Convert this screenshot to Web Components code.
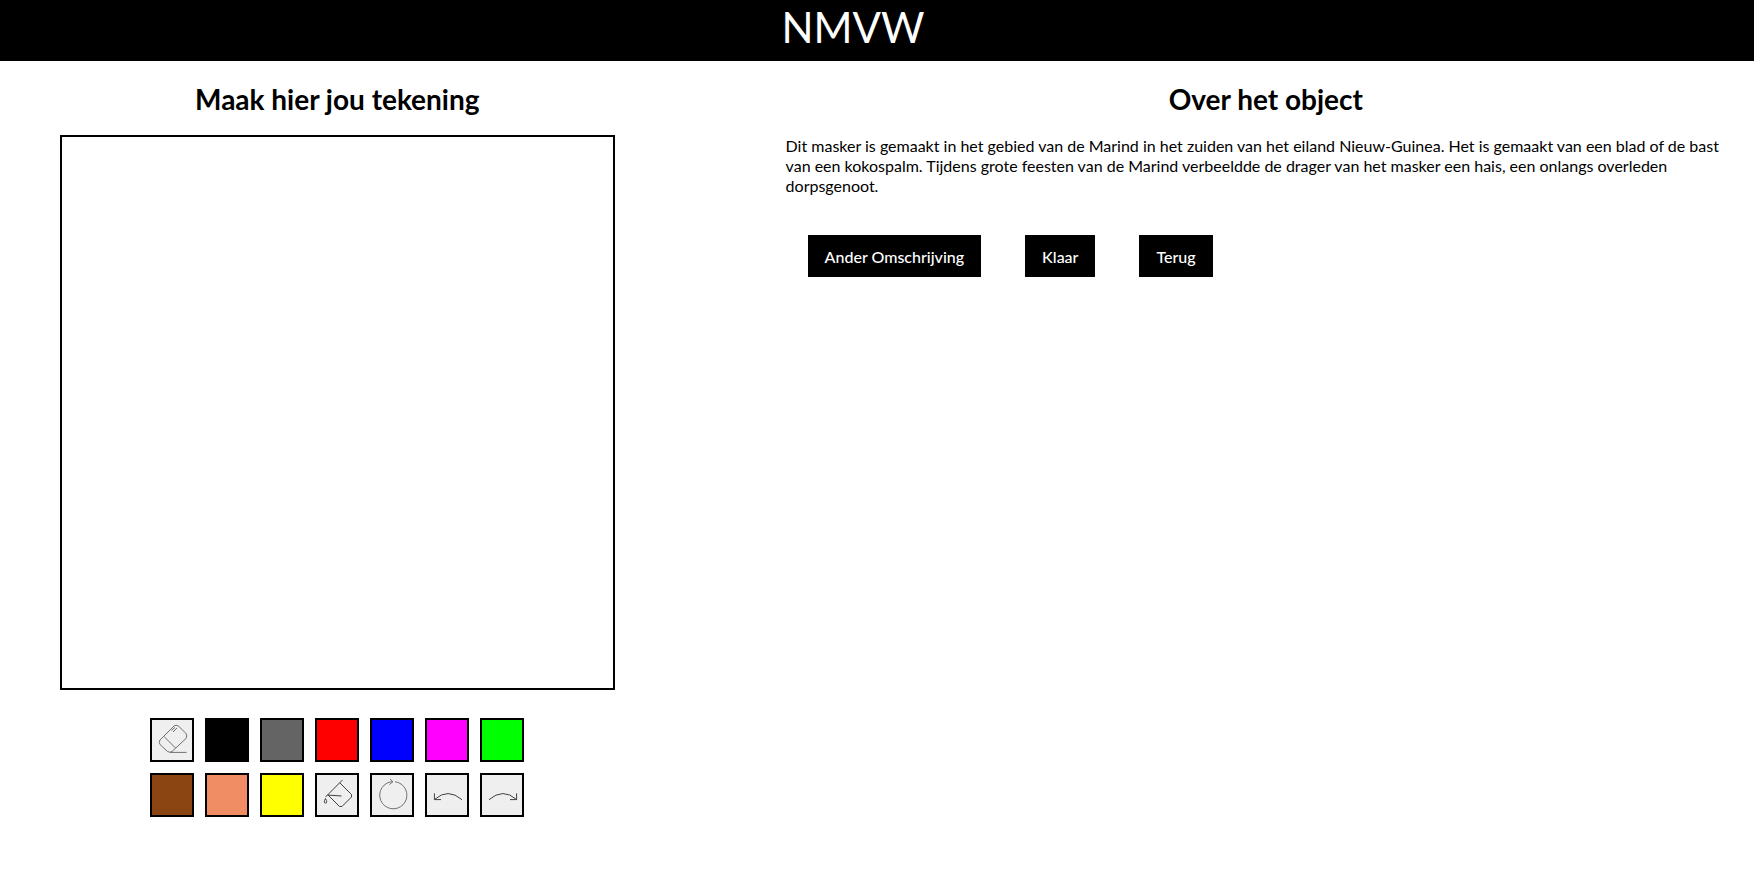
<!DOCTYPE html>
<html lang="nl">
<head>
<meta charset="utf-8">
<meta name="viewport" content="width=device-width, initial-scale=1">
<title>NMVW</title>
<style>
  body { margin: 0; background: #fff; color: #000; font: 16px/20px "Gill Sans MT", Lato, sans-serif; }
</style>
</head>
<body>
<nmvw-app></nmvw-app>
<script>
const define = (name, html) => {
  const template = document.createElement('template');
  template.innerHTML = html;
  customElements.define(name, class extends HTMLElement {
    constructor() {
      super();
      this.attachShadow({ mode: 'open' }).append(template.content.cloneNode(true));
    }
  });
};

define('site-header', `
  <style>
    :host { display: block; background: #000; color: #fff; text-align: center; padding: 3px 0 10px; }
    span { font-size: 42px; line-height: 48px; display: block; padding-right: 48px; }
  </style>
  <span><slot></slot></span>`);

define('page-title', `
  <style>
    :host { display: block; padding: 23px 0 20px; text-align: center; }
    h2 { margin: 0; font-size: 28px; line-height: 31px; font-weight: 700; }
  </style>
  <h2><slot></slot></h2>`);

define('action-button', `
  <style>
    :host { display: block; }
    button { font: inherit; font-weight: 500; color: #fff; background: #000; border: 0; border-radius: 0; padding: 12px 17px 10px; margin: 0; cursor: pointer; }
  </style>
  <button type="button"><slot></slot></button>`);

const icons = {
  eraser: '<path d="M7.500 20.500 22 6q2-1.500 4.500 0l7.500 7.500q1.500 2.500 0 5L20 31.500q-2 1.500-4.500 0L8 24.500q-1.500-2 0-4ZM12 16.500 23.500 28M18 32.400H34.500M19.500 10.500 23 7.500M21 12l4-4"/>',
  fill: '<path class="dark" d="M25.500 5 8.500 22M23 8 34.500 19.500V22L25 31.500H22.500L11 20M10.500 20 24.500 21M8.500 23.500q-2.500 4.500 0 4.500t0-4.500Z"/>',
  reset: '<path d="M23 6.700A13.600 13.600 0 1 1 18 7Q19 6.700 20.700 6.700M18 4 21 6.700 17.500 9.500"/>',
  undo: '<path class="dark" d="M35 24.700Q21 12.500 7.500 24.500M7.400 18.300V24.600H14"/>',
  redo: '<path class="dark" d="M7 24.700Q21 12.500 34.500 24.500M34.600 18.300V24.600H28"/>'
};

customElements.define('tool-button', class extends HTMLElement {
  connectedCallback() {
    const root = this.attachShadow({ mode: 'open' });
    const icon = icons[this.getAttribute('icon')];
    root.innerHTML = `
      <style>
        :host { display: block; }
        button { display: block; box-sizing: border-box; width: 44px; height: 44px; padding: 0; margin: 0; border: 2px solid #000; border-radius: 0; background: #efefef; cursor: pointer; }
        svg { display: block; width: 40px; height: 40px; fill: none; stroke: #707070; stroke-width: 1; }
        .dark { stroke: #404040; }
      </style>
      <button type="button">${icon ? `<svg viewBox="0 0 40 40" aria-hidden="true">${icon}</svg>` : ''}</button>`;
    const button = root.querySelector('button');
    button.setAttribute('aria-label', this.getAttribute('label'));
    if (this.hasAttribute('color')) button.style.background = this.getAttribute('color');
  }
});

define('drawing-board', `
  <style>
    :host { display: block; }
    canvas { display: block; box-sizing: border-box; width: calc(100% - 120px); aspect-ratio: 1; margin: 0 auto; border: 2px solid #000; }
    .tools { display: grid; grid-template-columns: repeat(7, 44px); gap: 11px; justify-content: center; padding: 28px 0 54px; }
  </style>
  <page-title>Maak hier jou tekening</page-title>
  <canvas width="551" height="551" aria-label="Tekening"></canvas>
  <div class="tools">
    <tool-button icon="eraser" label="Gum"></tool-button>
    <tool-button color="#000" label="Zwart"></tool-button>
    <tool-button color="#646464" label="Grijs"></tool-button>
    <tool-button color="#f00" label="Rood"></tool-button>
    <tool-button color="#00f" label="Blauw"></tool-button>
    <tool-button color="#f0f" label="Magenta"></tool-button>
    <tool-button color="#0f0" label="Groen"></tool-button>
    <tool-button color="#8b4513" label="Bruin"></tool-button>
    <tool-button color="#f08d64" label="Zalm"></tool-button>
    <tool-button color="#ff0" label="Geel"></tool-button>
    <tool-button icon="fill" label="Vullen"></tool-button>
    <tool-button icon="reset" label="Opnieuw"></tool-button>
    <tool-button icon="undo" label="Ongedaan maken"></tool-button>
    <tool-button icon="redo" label="Herhalen"></tool-button>
  </div>`);

define('object-info', `
  <style>
    :host { display: block; }
    p { margin: 0; padding: 1px 12px 0 0; }
    .actions { display: flex; flex-wrap: wrap; gap: 44px; padding: 39px 22px; }
  </style>
  <page-title>Over het object</page-title>
  <p><slot></slot></p>
  <div class="actions">
    <action-button>Ander Omschrijving</action-button>
    <action-button>Klaar</action-button>
    <action-button>Terug</action-button>
  </div>`);

define('nmvw-app', `
  <style>
    :host { display: block; }
    main { display: grid; grid-template-columns: 5fr 8fr; }
    object-info { padding: 0 8px 0 111px; }
  </style>
  <site-header>NMVW</site-header>
  <main>
    <drawing-board></drawing-board>
    <object-info>Dit masker is gemaakt in het gebied van de Marind in het zuiden van het eiland Nieuw-Guinea. Het is gemaakt van een blad of de bast van een kokospalm. Tijdens grote feesten van de Marind verbeeldde de drager van het masker een hais, een onlangs overleden dorpsgenoot.</object-info>
  </main>`);
</script>
</body>
</html>
